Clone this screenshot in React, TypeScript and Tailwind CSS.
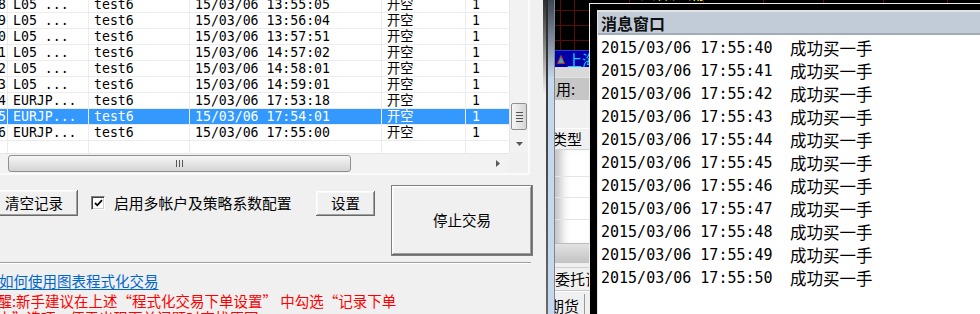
import React from "react";

type Trade = { no: string; sym: string; acct: string; time: string; act: string; qty: string };

const trades: Trade[] = [
  { no: "18", sym: "L05 ...", acct: "test6", time: "15/03/06 13:55:05", act: "开空", qty: "1" },
  { no: "19", sym: "L05 ...", acct: "test6", time: "15/03/06 13:56:04", act: "开空", qty: "1" },
  { no: "20", sym: "L05 ...", acct: "test6", time: "15/03/06 13:57:51", act: "开空", qty: "1" },
  { no: "21", sym: "L05 ...", acct: "test6", time: "15/03/06 14:57:02", act: "开空", qty: "1" },
  { no: "22", sym: "L05 ...", acct: "test6", time: "15/03/06 14:58:01", act: "开空", qty: "1" },
  { no: "23", sym: "L05 ...", acct: "test6", time: "15/03/06 14:59:01", act: "开空", qty: "1" },
  { no: "24", sym: "EURJP...", acct: "test6", time: "15/03/06 17:53:18", act: "开空", qty: "1" },
  { no: "25", sym: "EURJP...", acct: "test6", time: "15/03/06 17:54:01", act: "开空", qty: "1" },
  { no: "26", sym: "EURJP...", acct: "test6", time: "15/03/06 17:55:00", act: "开空", qty: "1" },
];

const SELECTED = 7;

const messages = ["40", "41", "42", "43", "44", "45", "46", "47", "48", "49", "50"].map(
  (s) => `2015/03/06 17:55:${s}`
);

const cols = "grid grid-cols-[22px_81px_101px_192px_84px_1fr]";
const cell = "pl-[5px] border-r border-[#ececec] leading-[15px] whitespace-nowrap overflow-hidden";

// classic raised win32 button
const btn =
  "bg-[#f0f0f0] flex items-center justify-center text-[14.5px] leading-none shrink-0 shadow-[inset_-1px_-1px_0_#696969,inset_1px_1px_0_#ffffff,inset_-2px_-2px_0_#a0a0a0,inset_2px_2px_0_#f8f8f8]";

function VScroll() {
  return (
    <div className="w-[19px] h-full flex flex-col bg-[#f2f2f2] border-l border-[#e6e6e6]">
      <div className="flex-1 flex flex-col items-center">
        <div className="mt-[103px] w-[16px] h-[27px] rounded-[2px] border border-[#8f8f8f] bg-linear-to-r from-[#f6f6f6] to-[#d6d6d6] flex flex-col items-center justify-center gap-[2px]">
          <div className="w-[7px] h-px bg-[#555]" />
          <div className="w-[7px] h-px bg-[#555]" />
          <div className="w-[7px] h-px bg-[#555]" />
          <div className="w-[7px] h-px bg-[#555]" />
        </div>
      </div>
      <div className="h-[19px] flex items-center justify-center">
        <svg width="7" height="4" viewBox="0 0 7 4">
          <path d="M0 0h7L3.5 4z" fill="#5a5a5a" />
        </svg>
      </div>
    </div>
  );
}

function HScroll() {
  return (
    <div className="flex h-[20px] shrink-0">
      <div className="w-[509px] flex items-center bg-[#f2f2f2] border-t border-[#e6e6e6]">
        <div className="ml-[8px] w-[343px] h-[17px] rounded-[3px] border border-[#8f8f8f] bg-linear-to-b from-[#f6f6f6] to-[#d4d4d4] flex items-center justify-center gap-[2px]">
          <div className="h-[7px] w-px bg-[#555]" />
          <div className="h-[7px] w-px bg-[#555]" />
          <div className="h-[7px] w-px bg-[#555]" />
        </div>
        <div className="ml-auto w-[22px] flex items-center justify-center">
          <svg width="4" height="7" viewBox="0 0 4 7">
            <path d="M0 0v7l4-3.5z" fill="#5a5a5a" />
          </svg>
        </div>
      </div>
      <div className="w-[19px] bg-[#f0f0f0]" />
    </div>
  );
}

function TradeList() {
  return (
    <div className="w-[530px] h-[175px] shrink-0 flex flex-col bg-white border-r-2 border-b-2 border-[#fbfbfb]">
      <div className="flex h-[153px] shrink-0">
        <div className="w-[509px] h-full overflow-hidden">
          <div className="-mt-[3px] -ml-[14px] w-[523px] h-[159px] flex flex-col font-['DejaVu_Sans_Mono','Noto_Sans_CJK_SC',monospace] text-[13.2px]">
            {trades.map((t, i) => (
              <div
                key={t.no}
                className={
                  i === SELECTED
                    ? `${cols} h-[16px] shrink-0 border-b border-[#ececec] bg-[#3399ff] text-white`
                    : `${cols} h-[16px] shrink-0 border-b border-[#ececec] text-black`
                }
              >
                <div className="pl-[4px] border-r border-[#ececec] leading-[15px] whitespace-nowrap overflow-hidden">{t.no}</div>
                <div className={cell}>{t.sym}</div>
                <div className={cell}>{t.acct}</div>
                <div className={cell}>{t.time}</div>
                <div className={cell}>{t.act}</div>
                <div className="pl-[6px] leading-[15px]">{t.qty}</div>
              </div>
            ))}
            <div className={`${cols} flex-1`}>
              <div className="border-r border-[#ececec]" />
              <div className="border-r border-[#ececec]" />
              <div className="border-r border-[#ececec]" />
              <div className="border-r border-[#ececec]" />
              <div className="border-r border-[#ececec]" />
              <div />
            </div>
          </div>
        </div>
        <VScroll />
      </div>
      <HScroll />
    </div>
  );
}

function LeftPanel() {
  return (
    <div className="w-[543px] shrink-0 h-full overflow-hidden flex flex-col">
      <TradeList />

      <div className="flex items-start pt-[10px] shrink-0">
        <div className="flex items-center h-[26px] mt-[5px]">
          <button className={`${btn} -ml-[10px] w-[88px] h-[26px]`}>清空记录</button>
          <span className="ml-[13px] w-[14px] h-[14px] bg-white border-t border-l border-[#808080] border-r border-b border-r-white border-b-white shadow-[inset_1px_1px_0_#404040,inset_-1px_-1px_0_#d4d0c8] flex items-center justify-center shrink-0">
            <svg width="9" height="8" viewBox="0 0 9 8">
              <path d="M1 4 L3.3 6.3 L8 1.2" fill="none" stroke="#000" strokeWidth="1.8" />
            </svg>
          </span>
          <span className="ml-[9px] w-[202px] whitespace-nowrap text-[14.8px]">启用多帐户及策略系数配置</span>
          <button className={`${btn} w-[59px] h-[25px]`}>设置</button>
        </div>
        <button className={`${btn} ml-[16px] w-[142px] h-[71px] border border-[#7f7f7f]`}>停止交易</button>
      </div>

      <div className="mt-[6px] w-[531px] h-[2px] shrink-0 border-t border-[#a0a0a0] border-b border-b-white" />

      <a className="mt-[8px] -ml-[1px] text-[14.5px] leading-[17px] text-[#0066cc] underline underline-offset-2 whitespace-nowrap shrink-0">
        如何使用图表程式化交易
      </a>

      <div className="mt-[3px] -ml-[17px] text-[14.5px] leading-[17px] text-[#ff0000] whitespace-nowrap shrink-0">
        <div>提醒:新手建议在上述“程式化交易下单设置” 中勾选“记录下单</div>
        <div>日志”选项，便于出现下单问题时查找原因</div>
      </div>
    </div>
  );
}

function WindowEdge() {
  return (
    <div className="w-[12px] shrink-0 h-full flex">
      <div className="w-[3px] bg-linear-to-b from-[#2f2f2f] to-[#f0f0f0] to-30%" />
      <div className="w-[2px] bg-linear-to-b from-[#2a2a2a] to-[#6a6a6a]" />
      <div className="w-[6px] bg-linear-to-b from-[#3c4652] to-[#c6d8ee] to-25%" />
      <div className="w-px bg-[#858585]" />
    </div>
  );
}

function MessageWindow() {
  return (
    <div className="absolute left-[34px] top-[3px] w-[420px] h-[340px] border-l border-t border-[#ececec] bg-black pl-[7px] pt-[6px]">
      <div className="h-full flex flex-col bg-white border-l border-t-2 border-[#e2e2e2]">
        <div className="h-[21px] shrink-0 bg-[#c2ccd9] pl-[3px] flex items-center text-[16px] font-bold text-[#111]">
          消息窗口
        </div>
        <div className="h-[2px] shrink-0 bg-[#a3acb6]" />
        <div className="pt-[2px] pl-[3px] flex flex-col">
          {messages.map((m) => (
            <div key={m} className="flex items-center h-[23px] text-black">
              <span className="w-[189px] shrink-0 font-['DejaVu_Sans_Mono',monospace] text-[15px]">{m}</span>
              <span className="text-[16.5px]">成功买一手</span>
            </div>
          ))}
        </div>
      </div>
    </div>
  );
}

function RightApp() {
  return (
    <div className="relative flex-1 h-full overflow-hidden bg-[#f0f0f0] flex flex-col text-black">
      <div className="relative h-[50px] shrink-0 bg-black overflow-hidden">
        <svg className="absolute inset-0" width="425" height="50">
          <g stroke="#5a0b0b" strokeWidth="1">
            <line x1="5.5" y1="0" x2="5.5" y2="50" />
            <line x1="19.5" y1="0" x2="19.5" y2="50" />
            <line x1="74.5" y1="0" x2="74.5" y2="50" />
            <line x1="148.5" y1="0" x2="148.5" y2="50" />
            <line x1="208.5" y1="0" x2="208.5" y2="50" />
            <line x1="268.5" y1="0" x2="268.5" y2="50" />
            <line x1="328.5" y1="0" x2="328.5" y2="50" />
            <line x1="392.5" y1="0" x2="392.5" y2="50" />
            <line x1="0" y1="10.5" x2="425" y2="10.5" />
            <line x1="0" y1="25.5" x2="425" y2="25.5" />
            <line x1="0" y1="40.5" x2="425" y2="40.5" />
          </g>
        </svg>
        <span className="absolute left-[85px] -top-[16px] text-[16px] leading-[16px] text-[#ffff00] whitespace-nowrap">
          四保建涌
        </span>
      </div>
      <div className="h-[17px] shrink-0 bg-[#0000a8] flex items-center pl-[2px] gap-[2px] border-t border-[#3a3ad0]">
        <svg width="8" height="9" viewBox="0 0 8 9">
          <path d="M4 0.5L7.5 8.5H0.5z" fill="#1fb5b5" stroke="#e02020" strokeWidth="1" />
        </svg>
        <span className="text-[15px] leading-none text-[#1ccfff] whitespace-nowrap">上海</span>
      </div>
      <div className="h-[10px] shrink-0 bg-[#d9d9d9]" />
      <div className="h-[23px] shrink-0 bg-[#c6c6c6] border-t border-[#e2e2e2] flex items-center pl-[1px] text-[15px]">
        用:
      </div>
      <div className="h-[28px] shrink-0" />
      <div className="h-[22px] shrink-0 border-t border-white border-b border-b-[#d2d2d2] flex items-center -ml-[3px] text-[15px]">
        类型
      </div>
      <div className="h-[93px] shrink-0 bg-white flex flex-col shadow-[inset_12px_0_10px_-6px_rgba(0,0,0,0.25)]">
        <div className="h-[27px] border-b border-[#e4e4e4]" />
        <div className="h-[21px] border-b border-[#e4e4e4]" />
        <div className="h-[22px] border-b border-[#e4e4e4]" />
      </div>
      <div className="h-[20px] shrink-0 border-t border-[#bdbdbd] bg-linear-to-b from-[#e2e2e2] to-[#c2c2c2]" />
      <div className="h-[4px] shrink-0" />
      <div className="h-[23px] shrink-0 border-t border-[#d0d0d0] flex items-center text-[15px] whitespace-nowrap">
        委托记录
      </div>
      <div className="h-[2px] shrink-0 border-t border-[#c8c8c8] border-b border-b-white" />
      <div className="pt-[2px] flex">
        <div className="-ml-[6px] w-[36px] h-[24px] border-r border-[#9a9a9a] flex items-center text-[15px]">期货</div>
      </div>
      <MessageWindow />
    </div>
  );
}

export default function App() {
  return (
    <div className="flex w-[980px] h-[314px] overflow-hidden bg-[#f0f0f0] font-['Noto_Sans_CJK_SC',sans-serif] text-black">
      <LeftPanel />
      <WindowEdge />
      <RightApp />
    </div>
  );
}
